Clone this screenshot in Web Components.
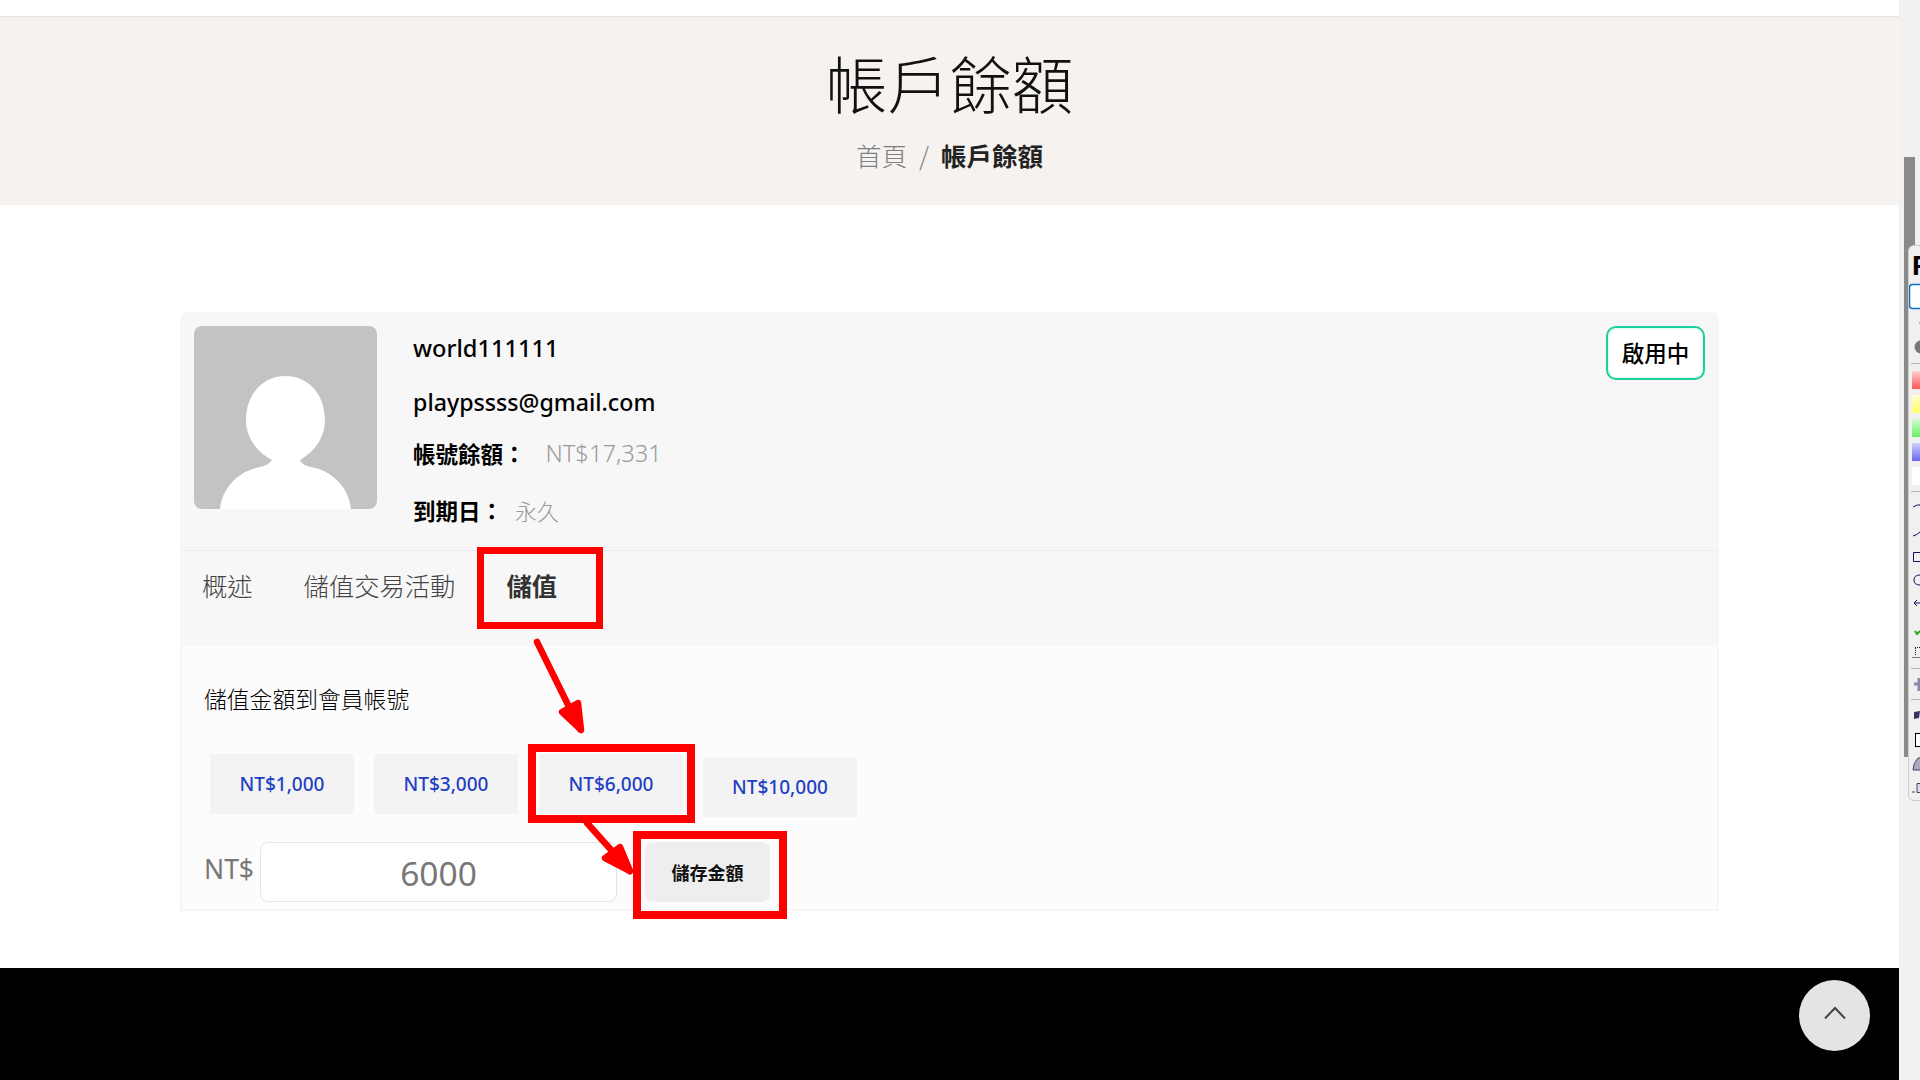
<!DOCTYPE html>
<html lang="zh-Hant"><head><meta charset="utf-8"><style>
html,body{margin:0;padding:0;background:#fff;height:1080px;overflow:hidden}
body{font-family:"Noto Sans CJK TC","Noto Sans",sans-serif;display:flex;position:relative}
</style></head><body>
<app-page></app-page>
<side-rail></side-rail>
<template id="t-page"><style>
:host{display:flex;flex-direction:column;width:1899px;height:1080px;flex:none;position:relative;overflow:hidden;background:#fff}
.top{height:16px;border-bottom:1px solid #e4e4e4;flex:none}
.space{height:107px;flex:none}
.wrap{padding:0 180px;flex:none}
footer{flex:1;background:#000;margin-top:57px}
.note{position:absolute;left:0;top:0;pointer-events:none}
</style><div class="top"></div><page-hero></page-hero><div class="space"></div><div class="wrap"><account-card></account-card></div><footer></footer><to-top></to-top>
<svg class="note" width="1899" height="1080" fill="none">
<g stroke="#f00" fill="none">
<rect x="480.5" y="550.5" width="119" height="75" stroke-width="7"/>
<rect x="532" y="748" width="159" height="71" stroke-width="8"/>
<rect x="637" y="835" width="146" height="80" stroke-width="8"/>
</g>
<g stroke="#f00" stroke-width="6.5" stroke-linecap="round" stroke-linejoin="round">
<path d="M537 642L580 729"/>
<path d="M562 712L581 730L578 703Z" fill="#f00"/>
<path d="M587 823L630 871"/>
<path d="M605 858L630 871L620 847Z" fill="#f00"/>
</g>
</svg></template>
<template id="t-hero"><style>
:host{display:flex;flex-direction:column;align-items:center;height:188px;background:#f5f2ef;flex:none}
h1{margin:32px 0 0;font-size:62px;font-weight:300;line-height:66px;color:#111}
nav{margin-top:25px;font-size:25.5px;line-height:30px;color:#808080;font-weight:300;display:flex;gap:12px}
b{color:#222;font-weight:700}
</style><h1>帳戶餘額</h1><nav><span>首頁</span><span>/</span><b>帳戶餘額</b></nav></template>
<template id="t-card"><style>
:host{display:block;width:1539px;height:599px;background:#f7f7f7;border-radius:8px;position:relative}
.head{display:flex;height:239px;padding:14px 14px 0 14px;box-sizing:border-box;border-bottom:1px solid #eee}
.avatar{width:183px;height:183px;border-radius:8px;overflow:hidden;flex:none;background:#c3c3c3}
.info{margin-left:36px;flex:1;color:#000}
.name{font:500 23.6px/30px "Noto Sans","Noto Sans CJK TC",sans-serif;margin-top:7px}
.mail{font:500 23.2px/30px "Noto Sans","Noto Sans CJK TC",sans-serif;margin-top:24px}
.row{font-size:22.5px;font-weight:700;line-height:30px;display:flex}
.row span{font-weight:300;color:#999}
.r1{margin-top:21px}.r1 span{margin-left:20px;font:300 23.7px/30px "Noto Sans",sans-serif}
.r2{margin-top:27px}.r2 span{margin-left:12px;font-size:22px}
.badge{align-self:flex-start;width:99px;height:54px;box-sizing:border-box;border:2px solid #1ccf9f;border-radius:10px;background:#fff;font-size:22.5px;font-weight:500;color:#000;display:flex;align-items:center;justify-content:center;padding-bottom:3px;box-shadow:inset 0 0 3px #b8eedd}
.tabs{display:flex;height:95px;box-sizing:border-box;align-items:flex-start;font-size:25.3px;line-height:36px;color:#444;font-weight:300;padding:16px 0 0 22px}
.tabs span:nth-child(2){margin-left:51px}.tabs span:nth-child(3){margin-left:51px;font-weight:700;color:#333}
.panel{background:#fcfcfc;border:2px solid #f6f6f6;border-top:0;height:265px;box-sizing:border-box;padding:37px 0 0 22px}
.title{font-size:22.8px;line-height:32px;color:#000;font-weight:300}
.amts{display:flex;margin-top:39px;margin-left:6px;align-items:flex-start}
.amts amount-btn:nth-child(2){margin-left:20px}.amts amount-btn:nth-child(3){margin-left:21px}
.amts amount-btn:nth-child(4){margin-left:20px;margin-top:3px}
.form{display:flex;margin-top:25px;align-items:flex-start}
.cur{font:400 26.5px/54px "Noto Sans",sans-serif;color:#777;width:56px}
.inp{width:357px;height:60px;box-sizing:border-box;border:1px solid #e5e5e5;border-radius:8px;background:#fff;font:400 33.5px/60px "Noto Sans",sans-serif;color:#777;text-align:center}
.save{width:125px;height:60px;margin-left:28px;background:#eee;border-radius:8px;font-size:18px;font-weight:700;color:#111;display:flex;align-items:center;justify-content:center}
</style>
<div class="head"><div class="avatar"><svg width="183" height="183" viewBox="0 0 183 183"><path d="M26 183C28 162 44 145 66 141C71 140 75 138 78 134C61 125 52 110 52 94C52 68 69 50 91.5 50C114 50 131 68 131 94C131 110 122 125 106 134C108 138 112 140 117 141C139 145 155 162 157 183Z" fill="#fff"/></svg></div>
<div class="info"><div class="name">world111111</div><div class="mail">playpssss@gmail.com</div><div class="row r1">帳號餘額：<span>NT$17,331</span></div><div class="row r2">到期日：<span>永久</span></div></div><div class="badge">啟用中</div></div>
<div class="tabs"><span>概述</span><span>儲值交易活動</span><span>儲值</span></div>
<div class="panel"><div class="title">儲值金額到會員帳號</div>
<div class="amts"><amount-btn>NT$1,000</amount-btn><amount-btn>NT$3,000</amount-btn><amount-btn>NT$6,000</amount-btn><amount-btn wide>NT$10,000</amount-btn></div>
<div class="form"><div class="cur">NT$</div><div class="inp">6000</div><div class="save">儲存金額</div></div></div></template>
<template id="t-amt"><style>
:host{display:flex;width:144px;height:60px;background:#f3f3f3;align-items:center;justify-content:center;color:#1f3fc4;font:500 19px/1 "Noto Sans",sans-serif}
:host([wide]){width:154px}
</style><slot></slot></template>
<template id="t-top"><style>
:host{position:absolute;left:1799px;top:980px;width:71px;height:71px;border-radius:50%;background:#e4e4e4;display:flex;align-items:center;justify-content:center}
svg{margin-bottom:6px}
</style><svg width="22" height="14" viewBox="0 0 22 14" fill="none"><path d="M1 12.5L11 2L21 12.5" stroke="#444" stroke-width="2"/></svg></template>
<template id="t-rail"><style>
:host{display:block;width:21px;height:1080px;background:#f1f1f1;flex:none;position:relative;overflow:hidden}
.thumb{position:absolute;left:5px;top:157px;width:11px;height:600px;background:#8a8a8a}
.panel{position:absolute;left:9px;top:245px;width:30px;height:556px;background:#f0f0f0;border:1px solid #ccc;border-radius:6px;box-sizing:border-box;overflow:hidden}
.p{font:700 28px/28px "Liberation Sans",sans-serif;color:#000;margin:6px 0 0 3px}
svg{position:absolute;left:-10px;top:-246px}
</style><div class="thumb"></div><div class="panel">
<svg width="31" height="1080" viewBox="1899 0 31 1080" fill="none">
<defs>
<linearGradient id="r" x2="0" y2="1"><stop offset="0" stop-color="#ffd0d0"/><stop offset="1" stop-color="#f55"/></linearGradient>
<linearGradient id="y" x2="0" y2="1"><stop offset="0" stop-color="#ffffd0"/><stop offset="1" stop-color="#ff6"/></linearGradient>
<linearGradient id="g" x2="0" y2="1"><stop offset="0" stop-color="#d0ffd0"/><stop offset="1" stop-color="#6e6"/></linearGradient>
<linearGradient id="b" x2="0" y2="1"><stop offset="0" stop-color="#d0d0ff"/><stop offset="1" stop-color="#66e"/></linearGradient>
</defs>
<rect x="1909.5" y="284.5" width="30" height="24" rx="3" fill="#fff" stroke="#0a6ecc" stroke-width="1.5"/>
<path d="M1919 323h2" stroke="#888"/>
<circle cx="1921" cy="347" r="6.5" fill="#777"/>
<path d="M1911 363.500h20M1911 491.500h20M1911 668.500h20M1911 699.500h20" stroke="#b5b5b5"/>
<rect x="1912" y="371" width="20" height="18" fill="url(#r)"/>
<rect x="1912" y="395" width="20" height="18" fill="url(#y)"/>
<rect x="1912" y="419" width="20" height="18" fill="url(#g)"/>
<rect x="1912" y="443" width="20" height="18" fill="url(#b)"/>
<rect x="1912" y="467" width="20" height="18" fill="#fff"/>
<g stroke="#115">
<path d="M1913 507q4-3 9-2M1913 536q4-1 7-4"/>
<path d="M1920 552.500h-6.500v9h6.500"/>
<path d="M1920 575q-6 0-6 5t6 5"/>
<path d="M1920 603h-6M1917 600l-3 3 3 3"/>
<path d="M1915 647.500h5M1915.500 648v8" stroke-dasharray="1 1"/>
<path d="M1912 657.500h9" stroke="#777"/>
</g>
<path d="M1915 631l2 3 3-3" stroke="#2a2" stroke-width="2"/>
<path d="M1914 684h10M1919 678v13" stroke="#88a" stroke-width="3"/>
<path d="M1914 712l6-1-1 7-5 1z" fill="#336"/>
<rect x="1915.500" y="733.500" width="10" height="13" fill="#fff" stroke="#000"/>
<path d="M1913 770q0-7 5-12h4v12z" fill="#aab" stroke="#446"/>
<path d="M1917 783.500h6v9h-6zM1912 792h3" stroke="#446" fill="#dde"/>
</svg>
<div class="p" style="position:relative">P</div>
</div></template>
<script>
const def=(n,t)=>customElements.define(n,class extends HTMLElement{constructor(){super();this.attachShadow({mode:'open'}).append(document.getElementById(t).content.cloneNode(true))}});
def('page-hero','t-hero');def('amount-btn','t-amt');def('account-card','t-card');def('to-top','t-top');def('app-page','t-page');def('side-rail','t-rail');
</script></body></html>
